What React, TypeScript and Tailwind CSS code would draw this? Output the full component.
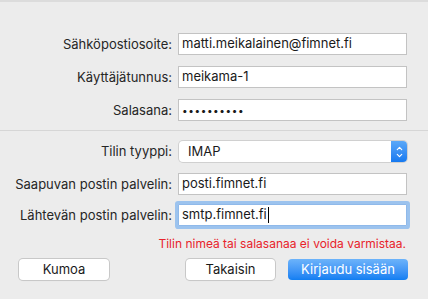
import { ChevronUp, ChevronDown } from 'lucide-react'

function Field({ label, children }: { label: string; children: React.ReactNode }) {
  return (
    <>
      <div className="text-right text-[13px] text-[#262626] leading-none self-center">{label}</div>
      {children}
    </>
  )
}

function TextBox({ value, focused = false }: { value: string; focused?: boolean }) {
  return (
    <div
      className={
        focused
          ? 'h-[22px] bg-white border border-[#8fb9ea] ring-[3px] ring-[#9cc3ee] rounded-[1px] flex items-center px-[3px] text-[13px] text-[#1a1a1a]'
          : 'h-[22px] bg-white border border-[#c3c3c3] flex items-center px-[3px] text-[13px] text-[#1a1a1a]'
      }
    >
      <span>{value}</span>
      {focused && <span className="w-px h-[16px] bg-black ml-px" />}
    </div>
  )
}

export default function App() {
  return (
    <div
      className="w-[428px] h-[299px] bg-[#ececec] border-t-2 border-[#dcdcdc] flex flex-col"
      style={{ fontFamily: 'Inter, "Liberation Sans", Arial, sans-serif' }}
    >
      {/* Account fields */}
      <div className="grid grid-cols-[172px_229px] gap-x-[6px] gap-y-[11px] pt-[31px]">
        <Field label="Sähköpostiosoite:">
          <TextBox value="matti.meikalainen@fimnet.fi" />
        </Field>
        <Field label="Käyttäjätunnus:">
          <TextBox value="meikama-1" />
        </Field>
        <Field label="Salasana:">
          <div className="h-[22px] bg-white border border-[#c3c3c3] flex items-center px-[3px] text-[10px] tracking-[0.6px] text-[#1a1a1a]">
            ••••••••••
          </div>
        </Field>
      </div>

      <div className="mt-[9px] h-px bg-[#d6d6d6]" />

      {/* Server fields */}
      <div className="grid grid-cols-[172px_229px] gap-x-[6px] mt-[10px]">
        <Field label="Tilin tyyppi:">
          <div className="h-[21px] ml-px bg-white rounded-[4px] shadow-[0_0_0_1px_#d0d0d0] flex items-stretch">
            <span className="flex-1 flex items-center pl-[9px] text-[13px] text-[#1a1a1a]">IMAP</span>
            <span className="w-[16px] rounded-r-[4px] bg-gradient-to-b from-[#5aa8f8] to-[#1479f0] flex flex-col items-center justify-center text-white">
              <ChevronUp size={9} strokeWidth={3} className="-mb-[1px]" />
              <ChevronDown size={9} strokeWidth={3} className="-mt-[1px]" />
            </span>
          </div>
        </Field>
        <div className="col-span-2 h-[11px]" />
        <Field label="Saapuvan postin palvelin:">
          <TextBox value="posti.fimnet.fi" />
        </Field>
        <div className="col-span-2 h-[9px]" />
        <Field label="Lähtevän postin palvelin:">
          <TextBox value="smtp.fimnet.fi" focused />
        </Field>
      </div>

      <div className="mt-[11px] w-[406px] text-right text-[12px] text-[#e8232b] leading-[14px]">
        Tilin nimeä tai salasanaa ei voida varmistaa.
      </div>

      {/* Buttons */}
      <div className="mt-[8px] flex items-center pl-[19px] pr-[20px]">
        <button className="w-[90px] h-[21px] bg-white rounded-[4px] shadow-[0_0_0_1px_#c8c8c8,0_1px_1px_rgba(0,0,0,0.08)] text-[13px] text-[#1a1a1a]">
          Kumoa
        </button>
        <button className="ml-auto w-[89px] h-[21px] bg-white rounded-[4px] shadow-[0_0_0_1px_#c8c8c8,0_1px_1px_rgba(0,0,0,0.08)] text-[13px] text-[#1a1a1a]">
          Takaisin
        </button>
        <button className="ml-[13px] w-[120px] h-[21px] rounded-[4px] bg-gradient-to-b from-[#6cb3fa] to-[#0f7ef2] text-[13px] text-white">
          Kirjaudu sisään
        </button>
      </div>
    </div>
  )
}
